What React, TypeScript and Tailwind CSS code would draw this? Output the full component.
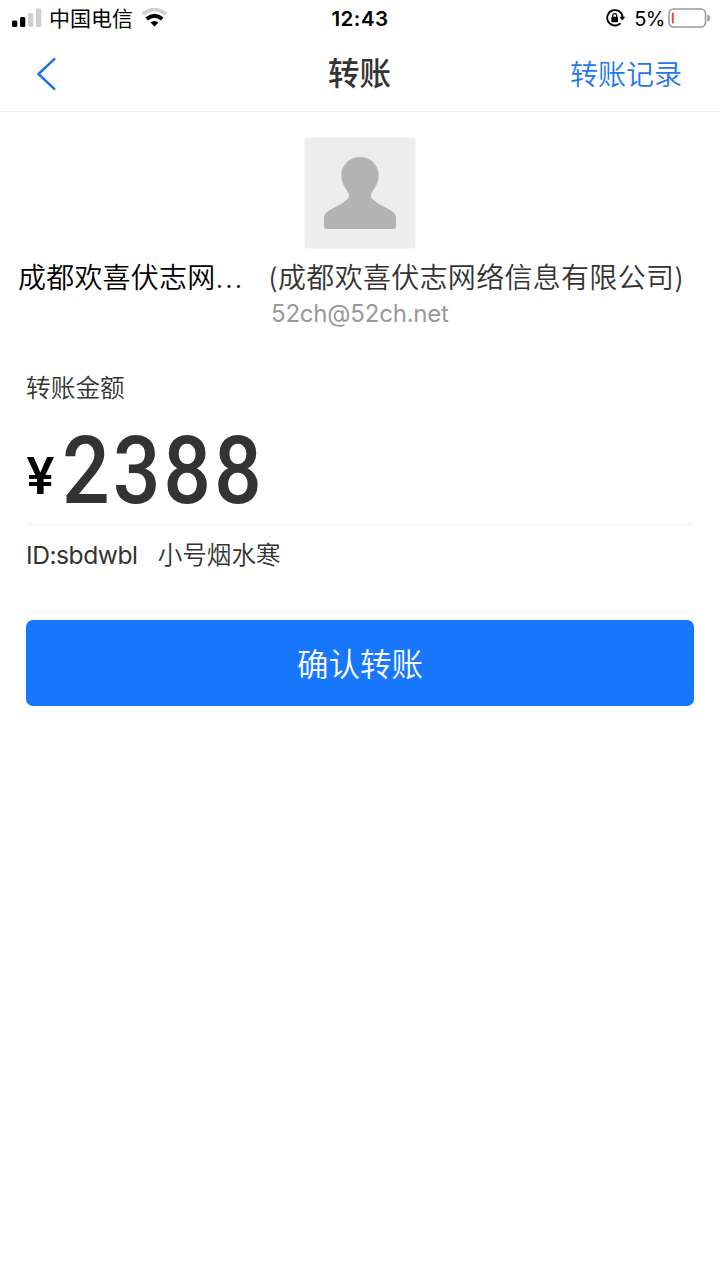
function SignalIcon() {
  return (
    <svg className="block h-[20px] w-[30px] shrink-0" viewBox="0 0 30 20">
      <rect x="0" y="12.5" width="5.3" height="6.5" rx="1.5" fill="#000" />
      <rect x="8" y="9" width="5.3" height="10" rx="1.5" fill="#000" />
      <rect x="16" y="5" width="5.3" height="14" rx="1.5" fill="#cfcfcf" />
      <rect x="24" y="0.5" width="5.3" height="18.5" rx="1.5" fill="#cfcfcf" />
    </svg>
  );
}

function WifiIcon() {
  return (
    <svg className="block h-[20px] w-[26px] shrink-0" viewBox="0 0 26 20" fill="none">
      <path d="M0.9 6.2 Q12.5 -3.2 24.1 6.2" stroke="#cfcfcf" strokeWidth="3.6" />
      <path d="M4.7 11 Q12.5 4.6 20.3 11" stroke="#000" strokeWidth="4" />
      <path d="M8.5 14.5 Q12.5 11.3 16.5 14.5 L12.5 18.4 Z" fill="#000" />
    </svg>
  );
}

function RotationLockIcon() {
  return (
    <svg className="block h-[18px] w-[20px] shrink-0" viewBox="0 0 20 18" fill="none">
      <path d="M13.9 14.7 A7.7 7.7 0 1 1 16.6 8" stroke="#000" strokeWidth="1.8" strokeLinecap="round" />
      <path d="M13.4 7.8 H19.2 L16.3 11.4 Z" fill="#000" />
      <rect x="5.4" y="7.8" width="6.6" height="5.4" rx="0.8" fill="#000" />
      <path d="M6.7 8 V6.7 A2 2 0 0 1 10.7 6.7 V8" stroke="#000" strokeWidth="1.2" />
    </svg>
  );
}

function BatteryIcon() {
  return (
    <svg className="block h-[20px] w-[43px] shrink-0" viewBox="0 0 43 20">
      <rect x="1" y="1" width="36.5" height="18" rx="4.5" fill="none" stroke="#9b9b9b" strokeWidth="1.6" />
      <rect x="3.8" y="4.5" width="2" height="11" rx="1" fill="#f0483c" />
      <path d="M39.3 6.5 Q42.3 7.5 42.3 10 Q42.3 12.5 39.3 13.5 Z" fill="#9b9b9b" />
    </svg>
  );
}

function StatusBar() {
  return (
    <div className="grid h-[36px] grid-cols-3 items-center pl-3 pr-[9px] text-black">
      <div className="flex items-center">
        <SignalIcon />
        <span className="ml-[7px] pt-px text-[21px] leading-none">中国电信</span>
        <span className="ml-[9px]"><WifiIcon /></span>
      </div>
      <div className="pr-[3px] pt-[2px] text-center text-[20.5px] font-semibold leading-none tracking-[0.5px]">12:43</div>
      <div className="flex items-center justify-end">
        <RotationLockIcon />
        <span className="ml-[8px] mr-[3px] pt-px text-[20px] leading-none tracking-[-0.5px]">5%</span>
        <BatteryIcon />
      </div>
    </div>
  );
}

function NavBar() {
  return (
    <div className="grid h-[76px] grid-cols-3 items-center border-b border-[#efefef] pl-[36px] pr-[38px]">
      <svg className="block h-[34px] w-[21px]" viewBox="0 0 21 34" fill="none">
        <path d="M18.3 2.2 L2.5 17 L18.3 31.8" stroke="#1f74e4" strokeWidth="2.5" strokeLinecap="round" strokeLinejoin="round" />
      </svg>
      <div className="pl-px text-center text-[31.5px] font-medium leading-none text-[#333]">转账</div>
      <div className="pt-[2px] text-right text-[28px] font-[350] leading-none text-[#1f78ee]">转账记录</div>
    </div>
  );
}

function Avatar() {
  return (
    <svg className="mx-auto block h-[112px] w-[112px]" viewBox="0 0 112 112">
      <rect x="0.5" y="0.5" width="111" height="111" rx="3" fill="#ededed" />
      <path
        d="M56 20 C66.5 20 74.7 28 74.7 38.5 C74.7 47 70 51 67.3 57 Q66 60 69 62.5 C74 67 81 70 87 73.5 Q92 76.5 92 81 V89 Q92 92 89 92 H23 Q20 92 20 89 V81 Q20 76.5 25 73.5 C31 70 38 67 43 62.5 Q46 60 44.7 57 C42 51 37.3 47 37.3 38.5 C37.3 28 45.5 20 56 20 Z"
        fill="#b3b3b3"
      />
    </svg>
  );
}

export default function App() {
  return (
    <main className="h-[1280px] w-[720px] overflow-hidden bg-white font-['Inter','Noto_Sans_CJK_SC',sans-serif]">
      <StatusBar />
      <NavBar />
      <section className="pt-[25px]">
        <Avatar />
        <div className="mt-[9px] flex pl-[18px] leading-[40px]">
          <div className="w-[250px] whitespace-nowrap text-[28px] font-[350] tracking-[0.2px] text-black">
            成都欢喜伏志网<span className="tracking-[1.6px]">...</span>
          </div>
          <div>
            <div className="whitespace-nowrap text-[28px] font-[350] tracking-[0.3px] text-[#333]">(成都欢喜伏志网络信息有限公司)</div>
            <div className="pl-[3px] text-[24px] leading-[32px] tracking-[-0.2px] text-[#999]">52ch@52ch.net</div>
          </div>
        </div>
      </section>
      <section className="px-[26px] pt-[41px] text-[#333]">
        <div className="text-[24.7px] font-[350] leading-[34px]">转账金额</div>
        <div className="flex h-[120px] items-start border-b border-[#efefef]">
          <span className="w-[36px] pt-[11px] text-[51px] font-semibold leading-[120px] text-black">¥</span>
          <span className="inline-block origin-left scale-x-[0.89] pt-[3px] font-['Roboto'] text-[94.5px] font-medium leading-[126px] tracking-[3.2px]">2388</span>
        </div>
        <div className="flex gap-[20px] pt-[12px] text-[24.6px] leading-[36px]">
          <span className="tracking-[-0.45px]">ID:sbdwbl</span>
          <span className="font-[350]">小号烟水寒</span>
        </div>
        <button className="mt-[47px] block h-[86px] w-full rounded-[7px] bg-[#1777ff] pt-[3px] text-[31.5px] font-[350] leading-none text-white">确认转账</button>
      </section>
    </main>
  );
}
